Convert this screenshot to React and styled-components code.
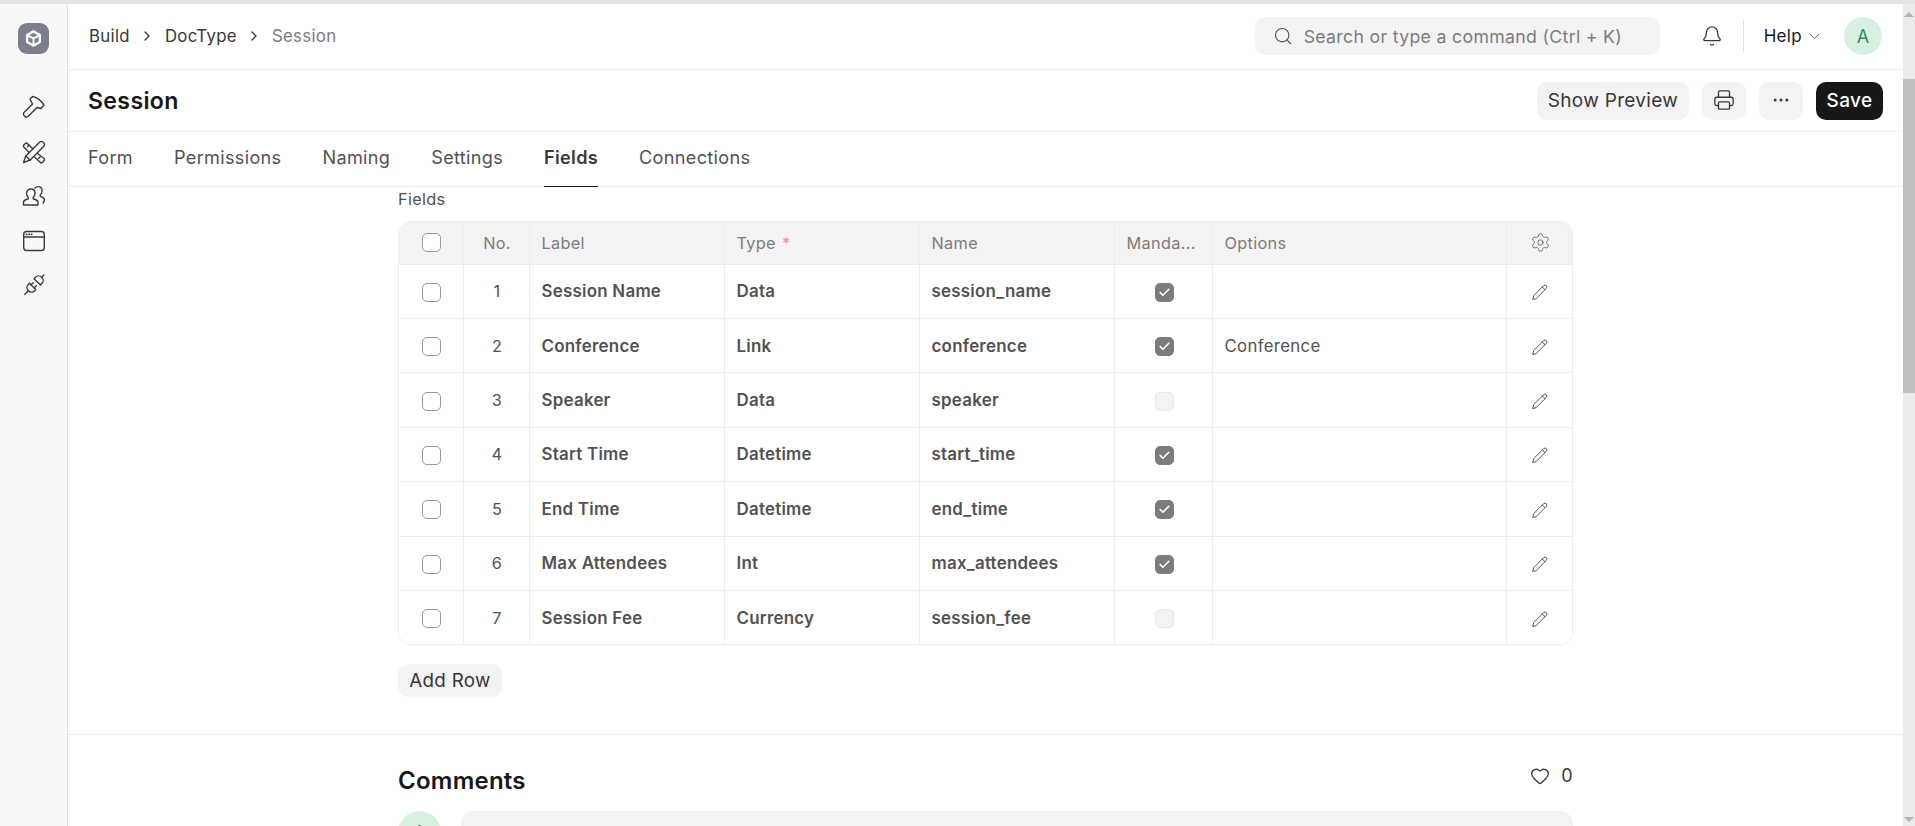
import React from "react";
import styled, { createGlobalStyle } from "styled-components";
import { Search, Bell, ChevronDown, ChevronRight, Printer, Ellipsis, Heart, Settings, Check } from "lucide-react";

const Global = createGlobalStyle`
  html, body { margin: 0; padding: 0; background: #fff; }
  body { font-family: Inter, "Noto Sans", sans-serif; font-size: 16px; letter-spacing: 0.02em; color: #383838; }
  * { box-sizing: border-box; }
`;

const Page = styled.div`
  height: 826px; width: 1915px; display: flex; flex-direction: column; overflow: hidden;
`;
const TopStrip = styled.div` height: 4px; flex: none; background: #e4e4e4; `;
const Body = styled.div` flex: 1; min-height: 0; display: flex; `;

const Sidebar = styled.aside`
  width: 68px; flex: none; background: #f8f8f8; border-right: 1px solid #e2e2e2;
  display: flex; flex-direction: column; align-items: center; padding: 19px 0 0 0;
`;
const Logo = styled.div`
  width: 31px; height: 31px; border-radius: 9px; background: #7c7f8a; color: #fff;
  display: flex; align-items: center; justify-content: center; margin-bottom: 41px;
`;
const SideIcon = styled.div`
  width: 24px; height: 24px; margin-bottom: 20.6px; color: #3a3a3a;
  svg { display: block; }
`;

const Main = styled.main` flex: 1; min-width: 0; display: flex; flex-direction: column; overflow: hidden; `;

const Navbar = styled.header`
  height: 66px; flex: none; border-bottom: 1px solid #ededed; display: flex; align-items: center;
  padding: 0 21px 1px 21px;
`;
const Crumbs = styled.nav` display: flex; align-items: center; flex: 1; color: #383838; font-size: 16.8px; `;
const CrumbText = styled.span` color: ${p => (p.$muted ? "#7c7c7c" : "#383838")}; `;
const CrumbSep = styled.span` display: flex; width: 35px; justify-content: center; color: #383838; `;
const SearchBox = styled.div`
  width: 405px; height: 38px; border-radius: 10px; background: #f3f3f3; display: flex; align-items: center;
  padding-left: 18px; gap: 11px; color: #7c7c7c; font-size: 17.7px;
`;
const BellWrap = styled.div` margin-left: 41px; width: 24px; display: flex; color: #383838; `;
const NavDivider = styled.div` width: 1px; height: 32px; background: #e2e2e2; margin: 0 20px 0 18px; `;
const Help = styled.div` display: flex; align-items: center; gap: 4px; color: #171717; font-size: 17px; `;
const Avatar = styled.div`
  width: ${p => p.$size || 38}px; height: ${p => p.$size || 38}px; flex: none; border-radius: 50%; background: #d9f0e1; color: #278f5e;
  display: flex; align-items: center; justify-content: center; font-size: 18px;
`;
const NavAvatar = styled(Avatar)` margin-left: 21px; `;

const PageHead = styled.div`
  height: 62px; flex: none; border-bottom: 1px solid #ededed; display: flex; align-items: center;
  padding: 0 20px;
`;
const Title = styled.h1` margin: 0; flex: 1; font-size: 23.1px; font-weight: 600; color: #171717; letter-spacing: 0.015em; `;
const Actions = styled.div` display: flex; gap: 13px; `;
const Button = styled.button`
  height: 38px; border: 0; border-radius: 10px; font: inherit; font-size: 19px; letter-spacing: inherit; display: flex; align-items: center; justify-content: center;
  width: ${p => p.$w}px;
  background: ${p => (p.$primary ? "#171717" : "#f3f3f3")}; color: ${p => (p.$primary ? "#fff" : "#383838")};
  font-weight: ${p => (p.$primary ? 500 : 400)}; padding: 0 0 1px;
`;

const Tabs = styled.div`
  height: 55px; flex: none; border-bottom: 1px solid #ededed; display: flex; padding-left: 20px; gap: 41px; font-size: 18.1px;
`;
const Tab = styled.div`
  display: flex; align-items: center; height: 55px; margin-bottom: -1px; padding-bottom: 5px;
  color: ${p => (p.$active ? "#383838" : "#525252")}; font-weight: ${p => (p.$active ? 600 : 400)};
  border-bottom: 1px solid ${p => (p.$active ? "#171717" : "transparent")};
`;

const FormSection = styled.section`
  padding: 2px 0 37px 330px; border-bottom: 1px solid #ededed; flex: none;
`;
const FieldLabel = styled.div` font-size: 16.3px; line-height: 20px; color: #525252; margin-bottom: 12px; `;

const GridTable = styled.div`
  width: 1175px; border: 1px solid #ededed; border-radius: 13px; overflow: hidden; font-size: 16.3px;
`;
const Row = styled.div`
  display: grid; grid-template-columns: 64.5px 66px 195px 195px 195px 98px 294px 1fr; align-items: stretch;
  height: ${p => (p.$head ? "41.6px" : "54.4px")};
  background: ${p => (p.$head ? "#f3f3f3" : "#fff")};
  border-top: ${p => (p.$head ? "0" : "1px solid #ededed")};
`;
const Cell = styled.div`
  display: flex; align-items: center; min-width: 0; white-space: nowrap;
  padding: ${p => (p.$center ? "0 10px 0 12px" : "0 11px 0 12px")};
  justify-content: ${p => (p.$center ? "center" : "flex-start")};
  border-right: ${p => (p.$last ? "0" : "1px solid #ededed")};
  color: ${p => (p.$head ? "#7c7c7c" : "#525252")};
`;
const NameText = styled.span` font-size: 16.9px; font-weight: 600; letter-spacing: 0.015em; `;
const OptionText = styled.span` font-size: 16.8px; `;
const Req = styled.span` color: #e88f8f; margin-left: 6px; `;
const Box = styled.span`
  width: 19px; height: 19px; flex: none; border-radius: 5px; display: flex; align-items: center; justify-content: center; color: #fff;
  background: ${p => (p.$checked ? "#7c7c7c" : p.$disabled ? "#f3f3f3" : "#fff")};
  border: 1px solid ${p => (p.$checked ? "#7c7c7c" : p.$disabled ? "#e8e8e8" : "#9a9a9a")};
`;
const RowBox = styled(Box)` margin-top: 2px; `;
const PencilWrap = styled.span` display: flex; margin-top: 2px; `;
const AddRow = styled(Button)` width: 104px; height: 33px; margin-top: 19px; font-size: 18.8px; `;

const CommentSection = styled.section` padding: 25px 0 0 330px; width: 1505px; `;
const CommentHead = styled.div` display: flex; align-items: center; justify-content: space-between; height: 36px; `;
const CommentTitle = styled.h2` margin: 5px 0 0; font-size: 24px; font-weight: 600; color: #171717; letter-spacing: 0.01em; `;
const Likes = styled.div` display: flex; align-items: center; gap: 11px; color: #383838; margin-top: -5px; font-size: 18px; `;
const CommentRow = styled.div` display: flex; gap: 20px; margin-top: 15px; `;
const CommentBox = styled.div` flex: 1; height: 120px; background: #f3f3f3; border-radius: 13px; `;

const ScrollTrack = styled.div`
  width: 12px; flex: none; background: #ebebeb; display: flex; flex-direction: column; align-items: center;
`;
const Arrow = styled.div`
  width: 0; height: 0; margin-top: ${p => (p.$down ? "auto" : "8px")}; margin-bottom: ${p => (p.$down ? "4px" : "0")};
  border-left: 5px solid transparent; border-right: 5px solid transparent;
  ${p => (p.$down ? "border-top: 5px solid #b5b5b5;" : "border-bottom: 5px solid #b5b5b5;")}
`;
const Thumb = styled.div` width: 12px; height: 314px; background: #bfbfbf; margin-top: 62px; `;

const Stroke = ({ children, w = 1.4, size = 24 }) => (
  <svg width={size} height={size} viewBox="0 0 24 24" fill="none" stroke="currentColor" strokeWidth={w} strokeLinecap="round" strokeLinejoin="round">{children}</svg>
);

const HammerIcon = () => (
  <Stroke>
    <path d="M2 17.5L10.5 9L8 4L10.5 1.5C14 2 19 5.5 22 10L19 13.5L15 12.5L6 21.5A2.5 2.5 0 0 1 2.5 21A2.5 2.5 0 0 1 2 17.5Z" />
  </Stroke>
);
const ToolsIcon = () => (
  <Stroke>
    <path d="M21.5 2.4a3 3 0 0 1 0 4.2L8 20.2 1.5 22.5 3.8 16 17.3 2.4a3 3 0 0 1 4.2 0z" />
    <path d="M4 16l4.2 4.2" />
    <path d="M10.5 8.6L5.6 3.7a1.8 1.8 0 0 0-2.5 0L2 4.8a1.8 1.8 0 0 0 0 2.5l4.9 4.9" />
    <path d="M15.5 13.5l6.3 4.7a1.8 1.8 0 0 1 .2 2.6l-1.3 1.4a1.8 1.8 0 0 1-2.5 0L12.5 17" />
    <path d="M5.5 6.5l1.6-1.6M16.5 18.5l1.6-1.6" />
  </Stroke>
);
const TeamIcon = () => (
  <Stroke>
    <path d="M9 5c2.5 0 4 1.9 4 4.2 0 1.7-.6 3.1-1.8 4v1.5c2.2.6 4.3 1.4 4.8 3.2V21H1.5v-3.1c.5-1.8 2.6-2.6 4.8-3.2v-1.5C5.1 12.3 4.5 10.9 4.5 9.2 4.5 6.9 6.5 5 9 5z" />
    <path d="M13 4c.8-.8 1.9-1.4 3.1-1.4 2.5 0 4 1.9 4 4.2 0 1.7-.6 3.1-1.8 4v1.5c2 .6 3.7 1.4 4.2 3.2 0 1.4-.5 2.3-1.5 3.5" />
  </Stroke>
);
const BrowserIcon = () => (
  <Stroke>
    <rect x="1.7" y="2.5" width="20.6" height="19" rx="3" />
    <path d="M1.7 8h20.6" />
    <path d="M4.5 5.3h.2M7 5.3h.2M9.5 5.3h.2" strokeWidth="1.8" />
  </Stroke>
);
const PlugIcon = () => (
  <Stroke>
    <g transform="rotate(45 12 12)">
      <path d="M7.5 7.5h9V5.5a4.5 4.5 0 0 0-9 0z" />
      <path d="M12 1V-2" />
      <path d="M7.5 14h9v1.5a4.5 4.5 0 0 1-9 0z" />
      <path d="M9.8 14v-3M14.2 14v-3M12 20v5" />
    </g>
  </Stroke>
);
const CubeIcon = () => (
  <Stroke size={19} w={3}>
    <path d="M12 3l8 4.5v9L12 21l-8-4.5v-9z" />
    <path d="M4.5 8L12 12l7.5-4M12 12v8" strokeWidth="2.4" />
  </Stroke>
);
const PencilIcon = () => (
  <svg width="18" height="18" viewBox="0 0 18 18" fill="none" stroke="#555" strokeWidth="1" strokeLinejoin="round" strokeLinecap="round">
    <path d="M1.8 16.2l.9-3.6L12.6 2.7a1.9 1.9 0 0 1 2.7 2.7L5.4 15.3z" />
    <path d="M11.3 4l2.7 2.7" />
  </svg>
);

const rows = [
  ["1", "Session Name", "Data", "session_name", true, ""],
  ["2", "Conference", "Link", "conference", true, "Conference"],
  ["3", "Speaker", "Data", "speaker", false, ""],
  ["4", "Start Time", "Datetime", "start_time", true, ""],
  ["5", "End Time", "Datetime", "end_time", true, ""],
  ["6", "Max Attendees", "Int", "max_attendees", true, ""],
  ["7", "Session Fee", "Currency", "session_fee", false, ""],
];
const tabs = ["Form", "Permissions", "Naming", "Settings", "Fields", "Connections"];

export default function App() {
  return (
    <Page>
      <Global />
      <TopStrip />
      <Body>
        <Sidebar>
          <Logo><CubeIcon /></Logo>
          <SideIcon><HammerIcon /></SideIcon>
          <SideIcon><ToolsIcon /></SideIcon>
          <SideIcon><TeamIcon /></SideIcon>
          <SideIcon><BrowserIcon /></SideIcon>
          <SideIcon><PlugIcon /></SideIcon>
        </Sidebar>
        <Main>
          <Navbar>
            <Crumbs>
              <CrumbText>Build</CrumbText>
              <CrumbSep><ChevronRight size={16} /></CrumbSep>
              <CrumbText>DocType</CrumbText>
              <CrumbSep><ChevronRight size={16} /></CrumbSep>
              <CrumbText $muted>Session</CrumbText>
            </Crumbs>
            <SearchBox><Search size={20} strokeWidth={1.4} color="#525252" />Search or type a command (Ctrl + K)</SearchBox>
            <BellWrap><Bell size={22} strokeWidth={1.4} /></BellWrap>
            <NavDivider />
            <Help>Help <ChevronDown size={17} strokeWidth={1.3} color="#525252" /></Help>
            <NavAvatar>A</NavAvatar>
          </Navbar>
          <PageHead>
            <Title>Session</Title>
            <Actions>
              <Button $w={152}>Show Preview</Button>
              <Button $w={44}><Printer size={22} strokeWidth={1.4} /></Button>
              <Button $w={44}><Ellipsis size={20} strokeWidth={1.6} /></Button>
              <Button $w={67} $primary>Save</Button>
            </Actions>
          </PageHead>
          <Tabs>
            {tabs.map(t => <Tab key={t} $active={t === "Fields"}>{t}</Tab>)}
          </Tabs>
          <FormSection>
            <FieldLabel>Fields</FieldLabel>
            <GridTable>
              <Row $head>
                <Cell $head $center><Box /></Cell>
                <Cell $head $center>No.</Cell>
                <Cell $head>Label</Cell>
                <Cell $head>Type<Req>*</Req></Cell>
                <Cell $head>Name</Cell>
                <Cell $head>Manda...</Cell>
                <Cell $head>Options</Cell>
                <Cell $head $center $last><Settings size={21} strokeWidth={1.1} color="#6a6a6a" /></Cell>
              </Row>
              {rows.map(r => (
                <Row key={r[0]}>
                  <Cell $center><RowBox /></Cell>
                  <Cell $center>{r[0]}</Cell>
                  <Cell><NameText>{r[1]}</NameText></Cell>
                  <Cell><NameText>{r[2]}</NameText></Cell>
                  <Cell><NameText>{r[3]}</NameText></Cell>
                  <Cell $center>
                    {r[4]
                      ? <RowBox $checked><Check size={13} strokeWidth={3} /></RowBox>
                      : <RowBox $disabled />}
                  </Cell>
                  <Cell><OptionText>{r[5]}</OptionText></Cell>
                  <Cell $center $last><PencilWrap><PencilIcon /></PencilWrap></Cell>
                </Row>
              ))}
            </GridTable>
            <AddRow>Add Row</AddRow>
          </FormSection>
          <CommentSection>
            <CommentHead>
              <CommentTitle>Comments</CommentTitle>
              <Likes><Heart size={20} strokeWidth={1.6} />0</Likes>
            </CommentHead>
            <CommentRow>
              <Avatar $size={43}>A</Avatar>
              <CommentBox />
            </CommentRow>
          </CommentSection>
        </Main>
        <ScrollTrack>
          <Arrow />
          <Thumb />
          <Arrow $down />
        </ScrollTrack>
      </Body>
    </Page>
  );
}
